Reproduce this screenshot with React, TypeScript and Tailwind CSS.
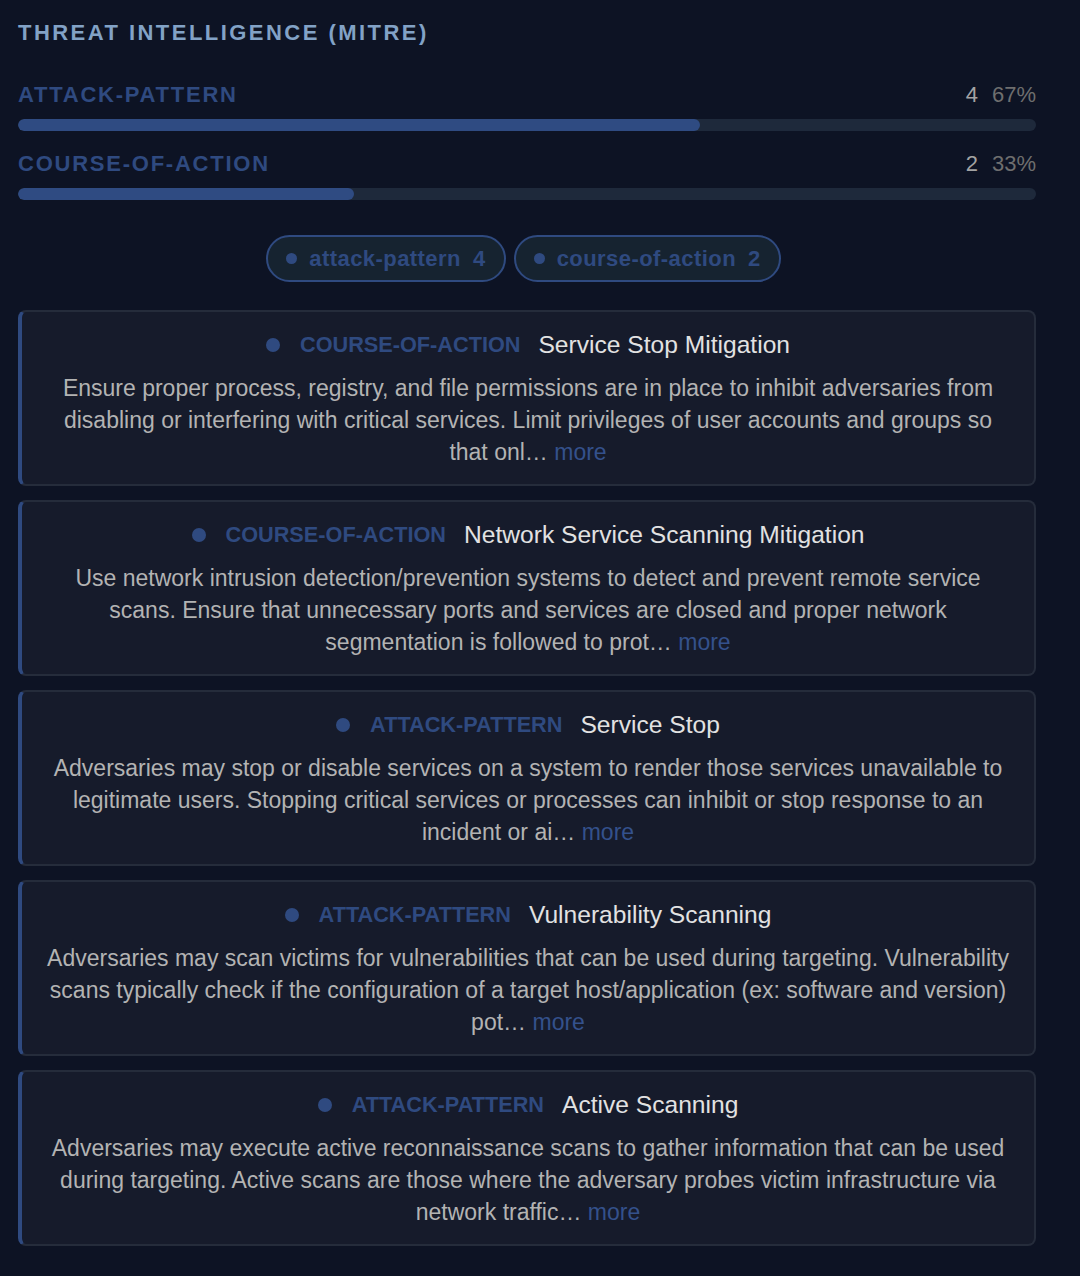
import React from 'react';

type Stat = { type: string; count: number; pct: number };

const stats: Stat[] = [
  { type: 'attack-pattern', count: 4, pct: 67 },
  { type: 'course-of-action', count: 2, pct: 33 },
];

const items = [
  {
    type: 'course-of-action',
    name: 'Service Stop Mitigation',
    desc: 'Ensure proper process, registry, and file permissions are in place to inhibit adversaries from disabling or interfering with critical services. Limit privileges of user accounts and groups so that onl…',
  },
  {
    type: 'course-of-action',
    name: 'Network Service Scanning Mitigation',
    desc: 'Use network intrusion detection/prevention systems to detect and prevent remote service scans. Ensure that unnecessary ports and services are closed and proper network segmentation is followed to prot…',
  },
  {
    type: 'attack-pattern',
    name: 'Service Stop',
    desc: 'Adversaries may stop or disable services on a system to render those services unavailable to legitimate users. Stopping critical services or processes can inhibit or stop response to an incident or ai…',
  },
  {
    type: 'attack-pattern',
    name: 'Vulnerability Scanning',
    desc: 'Adversaries may scan victims for vulnerabilities that can be used during targeting. Vulnerability scans typically check if the configuration of a target host/application (ex: software and version) pot…',
  },
  {
    type: 'attack-pattern',
    name: 'Active Scanning',
    desc: 'Adversaries may execute active reconnaissance scans to gather information that can be used during targeting. Active scans are those where the adversary probes victim infrastructure via network traffic…',
  },
];

const App: React.FC = () => {
  return (
    <div
      className="min-h-[1276px] bg-[#0d1324] pl-[18px] pr-[44px] pt-[19px] pb-8"
      style={{ fontFamily: '"Liberation Sans", Arial, sans-serif' }}
    >
      {/* Header */}
      <h2 className="text-[22px] leading-[28px] font-bold tracking-[0.112em] text-[#82a2c6]">
        THREAT INTELLIGENCE (MITRE)
      </h2>

      {/* Distribution bars */}
      <div className="mt-[34px] flex flex-col gap-[19px]">
        {stats.map((s) => (
          <div key={s.type}>
            <div className="flex items-center justify-between">
              <span className="text-[22px] leading-[28px] font-bold tracking-[0.08em] text-[#2f4a80] uppercase">
                {s.type}
              </span>
              <span className="text-[22px] leading-[28px] flex gap-[14px]">
                <span className="text-[#a3a3a3]">{s.count}</span>
                <span className="text-[#6e6e6e]">{s.pct}%</span>
              </span>
            </div>
            <div className="mt-[10px] h-[12px] w-full rounded-full bg-[#1e293b] overflow-hidden">
              <div className="h-full rounded-full bg-[#2f4b82]" style={{ width: `${s.pct}%` }} />
            </div>
          </div>
        ))}
      </div>

      {/* Filter pills */}
      <div className="mt-[35px] flex justify-center gap-[8px] pr-[7px]">
        {stats.map((s) => (
          <div
            key={s.type}
            className="flex h-[47px] items-center gap-[12px] rounded-full border-2 border-[#2f4a80] bg-[#162330] px-[18px] text-[22px] font-bold tracking-[0.02em] text-[#2f4a80]"
          >
            <span className="h-[11px] w-[11px] rounded-full bg-[#2f4a80]" />
            <span>{s.type}</span>
            <span>{s.count}</span>
          </div>
        ))}
      </div>

      {/* Entries */}
      <div className="mt-[28px] flex flex-col gap-[14px]">
        {items.map((it) => (
          <div
            key={it.name}
            className="rounded-lg border-2 border-[#252c3b] border-l-4 border-l-[#2f4a80] bg-[#161b2b] px-[22px] pt-[17px] pb-[16px] text-center"
          >
            <div className="flex items-center justify-center leading-[32px]">
              <span className="h-[14px] w-[14px] rounded-full bg-[#2f4a80]" />
              <span className="ml-[20px] text-[21.7px] font-bold uppercase text-[#2f4a80]">
                {it.type}
              </span>
              <span className="ml-[18px] text-[24.6px] text-[#e2e2e2]">{it.name}</span>
            </div>
            <p className="mt-[11px] text-[23px] leading-[32px] text-[#b3b3b3]">
              {it.desc} <span className="text-[#34518c]">more</span>
            </p>
          </div>
        ))}
      </div>
    </div>
  );
};

export default App;
